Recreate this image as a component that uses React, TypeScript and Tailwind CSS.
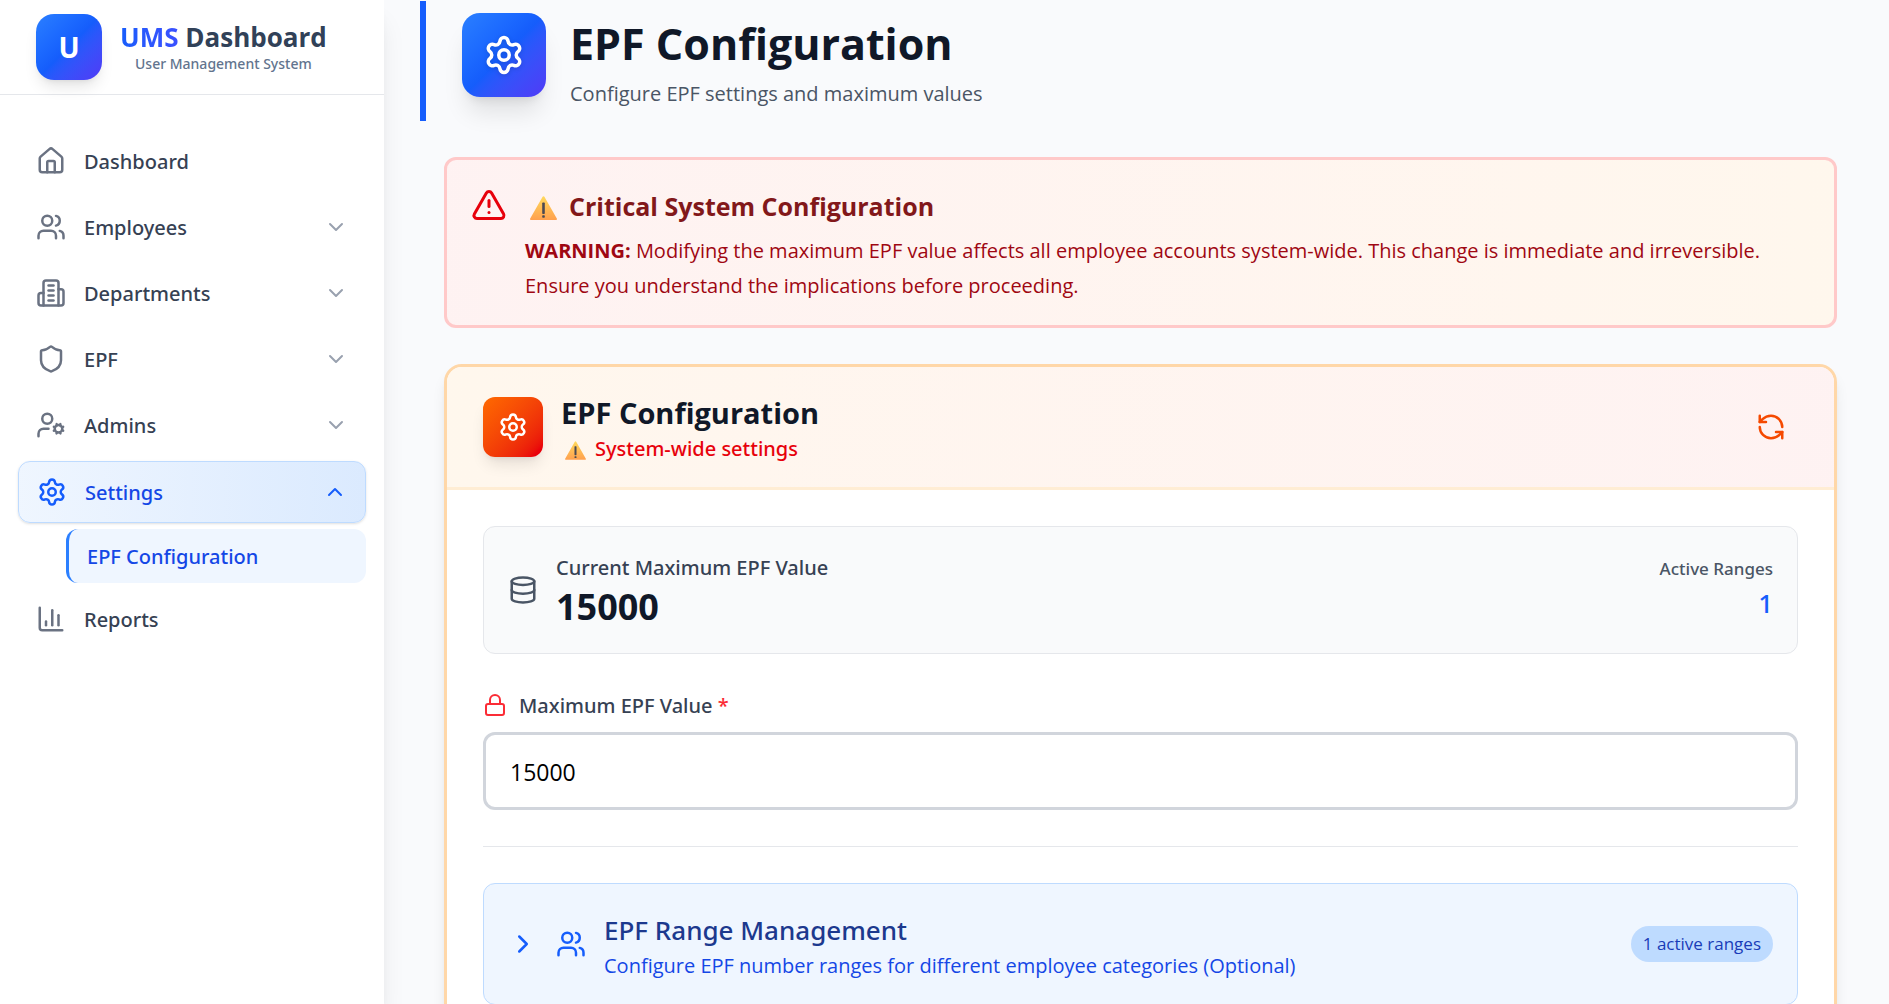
import { useState } from "react";
import type { ReactNode } from "react";
import {
  ChartColumn,
  ChevronDown,
  ChevronRight,
  ChevronUp,
  Database,
  House,
  Lock,
  RefreshCcw,
  Settings,
  Shield,
  TriangleAlert,
  UserCog,
  Users,
} from "lucide-react";

const medium = "font-['Noto_Sans','Open_Sans',sans-serif] font-medium";

function BuildingIcon({ className }: { className?: string }) {
  return (
    <svg
      className={className}
      viewBox="0 0 24 24"
      fill="none"
      stroke="currentColor"
      strokeWidth="2"
      strokeLinecap="round"
      strokeLinejoin="round"
      aria-hidden="true"
    >
      <path d="M6 22V4a2 2 0 0 1 2-2h8a2 2 0 0 1 2 2v18Z" />
      <path d="M6 12H4a2 2 0 0 0-2 2v6a2 2 0 0 0 2 2h2" />
      <path d="M18 9h2a2 2 0 0 1 2 2v9a2 2 0 0 1-2 2h-2" />
      <path d="M10 6h4" />
      <path d="M10 10h4" />
      <path d="M10 14h4" />
      <path d="M10 18h4" />
    </svg>
  );
}

function WarningSign({ className, id }: { className?: string; id: string }) {
  return (
    <svg className={className} viewBox="0 0 27 24" role="img" aria-label="Warning">
      <defs>
        <linearGradient id={id} x1="0" y1="0" x2="0" y2="1">
          <stop offset="0" stopColor="#ffd95c" />
          <stop offset="1" stopColor="#ffa04e" />
        </linearGradient>
      </defs>
      <path
        d="M12.6 0.8a1 1 0 0 1 1.8 0L26.8 22.6a0.9 0.9 0 0 1-0.8 1.3H1a0.9 0.9 0 0 1-0.8-1.3Z"
        fill={`url(#${id})`}
      />
      <rect x="12.2" y="6.5" width="2.6" height="11.5" rx="0.8" fill="#4b4a52" />
      <rect x="12.2" y="19.3" width="2.6" height="2.4" rx="0.8" fill="#4b4a52" />
    </svg>
  );
}

const groups: { label: string; icon: ReactNode; expandable: boolean }[] = [
  { label: "Dashboard", icon: <House className="size-[30px]" />, expandable: false },
  { label: "Employees", icon: <Users className="size-[30px]" />, expandable: true },
  { label: "Departments", icon: <BuildingIcon className="size-[30px]" />, expandable: true },
  { label: "EPF", icon: <Shield className="size-[30px]" />, expandable: true },
  { label: "Admins", icon: <UserCog className="size-[30px]" />, expandable: true },
];

function NavItem({ label, icon, expandable }: { label: string; icon: ReactNode; expandable: boolean }) {
  return (
    <button
      type="button"
      className="flex h-[60px] w-full items-center gap-[18px] rounded-xl px-[18px] text-left text-gray-700"
    >
      <span className="shrink-0 text-gray-500">{icon}</span>
      <span className={`grow pt-0.5 text-[20px] ${medium}`}>{label}</span>
      {expandable && <ChevronDown className="size-6 text-gray-400" />}
    </button>
  );
}

function Sidebar() {
  return (
    <aside className="z-10 flex w-96 shrink-0 flex-col bg-white shadow-xl">
      <div className="flex h-[95px] items-center gap-[18px] border-b border-gray-200 px-9">
        <div className="flex size-[66px] shrink-0 items-center justify-center rounded-[18px] bg-linear-to-br from-blue-500 via-blue-600 to-indigo-600 text-[28px] font-bold text-white shadow-lg">
          U
        </div>
        <div className="text-center">
          <p className="text-[26px] leading-[33px] font-bold whitespace-nowrap text-slate-700">
            <span className="bg-linear-to-r from-blue-600 to-[#3a50ff] bg-clip-text text-transparent">UMS</span>{" "}
            Dashboard
          </p>
          <p className={`text-[14px] leading-5 text-slate-500 ${medium}`}>User Management System</p>
        </div>
      </div>
      <nav className="flex flex-col gap-[6px] px-[18px] pt-9">
        {groups.map((g) => (
          <NavItem key={g.label} {...g} />
        ))}
        <button
          type="button"
          aria-expanded="true"
          className="flex h-[62px] w-full items-center gap-[18px] rounded-xl border border-blue-200 bg-linear-to-r from-blue-50 to-blue-100 px-[18px] text-left text-blue-700 shadow-sm"
        >
          <Settings className="size-[30px] shrink-0 text-blue-600" />
          <span className={`grow pt-0.5 text-[20px] ${medium}`}>Settings</span>
          <ChevronUp className="size-6 text-blue-600" />
        </button>
        <a
          href="#epf-configuration"
          aria-current="page"
          className={`ml-12 flex h-[54px] items-center rounded-xl border-l-3 border-blue-500 bg-blue-50 pt-0.5 pl-[18px] text-[20px] text-blue-700 ${medium}`}
        >
          EPF Configuration
        </a>
        <NavItem label="Reports" icon={<ChartColumn className="size-[30px]" />} expandable={false} />
      </nav>
    </aside>
  );
}

function PageHeader() {
  return (
    <header className="flex items-start gap-6 border-l-6 border-blue-600 py-3 pl-9">
      <div className="flex size-[84px] shrink-0 items-center justify-center rounded-[18px] bg-linear-to-br from-blue-500 via-blue-600 to-indigo-600 text-white shadow-xl">
        <Settings className="size-[42px] drop-shadow-sm" />
      </div>
      <div>
        <h1 className="text-[43px] leading-[62px] font-bold text-gray-900">EPF Configuration</h1>
        <p className="mt-1 text-[20px] leading-[30px] text-gray-600">
          Configure EPF settings and maximum values
        </p>
      </div>
    </header>
  );
}

function CriticalAlert() {
  return (
    <section
      role="alert"
      className="flex items-start gap-[18px] rounded-xl border-3 border-red-200 bg-linear-to-r from-red-50 to-orange-50 px-6 pt-6 pb-[22px]"
    >
      <TriangleAlert className="mt-[3px] size-9 shrink-0 text-red-600" />
      <div>
        <h2 className="flex items-center gap-3 pl-[5px] text-[25px] leading-[44px] font-bold text-red-900">
          <WarningSign id="warn-large" className="mt-1 h-6 w-[27px]" />
          Critical System Configuration
        </h2>
        <p className="mt-[5px] text-[20px] leading-[35px] text-red-800">
          <strong>WARNING:</strong>{" "}
          <span>
            Modifying the maximum EPF value affects all employee accounts system-wide. This change is immediate and
            irreversible.
          </span>{" "}
          <span>Ensure you understand the implications before proceeding.</span>
        </p>
      </div>
    </section>
  );
}

function ConfigurationCard() {
  const [value, setValue] = useState("15000");
  return (
    <section
      id="epf-configuration"
      className="overflow-hidden rounded-[18px] border-3 border-orange-200 bg-white shadow-lg"
    >
      <div className="flex h-[123px] items-center border-b-3 border-orange-100 bg-linear-to-r from-orange-50 to-red-50 px-9">
        <div className="flex size-[60px] shrink-0 items-center justify-center rounded-xl bg-linear-to-br from-[#ff6900] to-red-600 text-white shadow-lg">
          <Settings className="size-[30px]" />
        </div>
        <div className="ml-[18px] grow">
          <h2 className="text-[29px] leading-[44px] font-bold text-gray-900">EPF Configuration</h2>
          <p className={`flex items-center gap-[9px] pl-[4px] text-[20px] leading-7 text-red-600 ${medium}`}>
            <WarningSign id="warn-small" className="mt-0.5 h-[19px] w-[21px]" />
            System-wide settings
          </p>
        </div>
        <button type="button" aria-label="Refresh" className="rounded-xl p-3 text-[#f54900]">
          <RefreshCcw className="size-[30px]" />
        </button>
      </div>

      <div className="flex flex-col gap-9 p-9">
        <div className="flex h-32 items-center rounded-xl border border-gray-200 bg-gray-50 px-6">
          <Database className="size-[30px] shrink-0 text-gray-600" />
          <div className="ml-[18px] grow">
            <p className={`text-[20px] leading-8 text-gray-700 ${medium}`}>Current Maximum EPF Value</p>
            <p className="text-[36px] leading-[45px] font-bold text-gray-900">15000</p>
          </div>
          <div className="text-right">
            <p className={`text-[17px] leading-[26px] text-gray-600 ${medium}`}>Active Ranges</p>
            <p className={`text-[26px] leading-[42px] text-blue-600 ${medium}`}>1</p>
          </div>
        </div>

        <div>
          <label
            htmlFor="max-epf"
            className={`flex h-[30px] items-center gap-3 text-[20px] text-gray-700 ${medium}`}
          >
            <Lock className="size-6 text-[#fb2c36]" />
            <span className="pt-0.5">
              Maximum EPF Value <span className="text-[#fb2c36]">*</span>
            </span>
          </label>
          <input
            id="max-epf"
            type="text"
            inputMode="numeric"
            value={value}
            onChange={(e) => setValue(e.target.value)}
            className="mt-3 block h-[78px] w-full rounded-xl border-3 border-gray-300 bg-white px-6 pt-0.5 text-[23px] text-black"
          />
        </div>

        <hr className="border-gray-200" />

        <button
          type="button"
          aria-expanded="false"
          className="flex w-full items-center rounded-xl border border-blue-200 bg-blue-50 p-6 text-left"
        >
          <ChevronRight className="size-[30px] shrink-0 text-blue-600" />
          <Users className="ml-[18px] size-[30px] shrink-0 text-blue-600" />
          <span className="ml-[18px] flex grow flex-col">
            <span className={`text-[26px] leading-[44px] text-blue-900 ${medium}`}>EPF Range Management</span>
            <span className="text-[20px] leading-7 text-blue-700">
              Configure EPF number ranges for different employee categories (Optional)
            </span>
          </span>
          <span className="rounded-full bg-blue-200 px-3 text-[17px] leading-9 text-blue-800">1 active ranges</span>
        </button>
      </div>
    </section>
  );
}

export default function App() {
  return (
    <div className="flex h-screen overflow-hidden bg-[#f9fafc] font-['Open_Sans','Noto_Sans',sans-serif]">
      <Sidebar />
      <main className="min-w-0 grow overflow-hidden pt-px pr-7 pl-9">
        <PageHeader />
        <div className="flex flex-col gap-9 px-6 py-9">
          <CriticalAlert />
          <ConfigurationCard />
        </div>
      </main>
    </div>
  );
}
